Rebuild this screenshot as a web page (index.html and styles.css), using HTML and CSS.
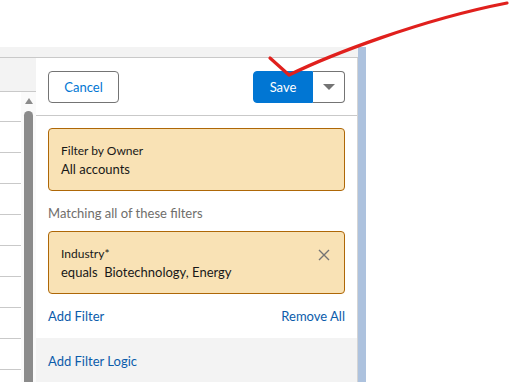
FILE: index.html
```html
<!DOCTYPE html>
<html lang="en">
<head>
    <meta charset="UTF-8">
    <title>Filters</title>
    <link rel="stylesheet" href="styles.css">
</head>
<body>
    <div class="stage">
        <div class="main">
            <div class="top-band"></div>
            <div class="split">
                <div class="list">
                    <div class="list-head"></div>
                    <div class="list-body">
                        <div class="rows">
                            <div class="row"></div>
                            <div class="row"></div>
                            <div class="row"></div>
                            <div class="row"></div>
                            <div class="row"></div>
                            <div class="row"></div>
                            <div class="row"></div>
                            <div class="row"></div>
                            <div class="row"></div>
                        </div>
                        <div class="scroll">
                            <div class="scroll-arrow"></div>
                            <div class="scroll-thumb"></div>
                        </div>
                    </div>
                </div>

                <div class="panel">
                    <div class="panel-head">
                        <button class="btn btn-neutral">Cancel</button>
                        <div class="btn-group">
                            <button class="btn btn-brand">Save</button>
                            <button class="btn btn-menu"><span class="caret"></span></button>
                        </div>
                    </div>
                    <div class="panel-body">
                        <div class="filter-card">
                            <div class="filter-label">Filter by Owner</div>
                            <div class="filter-value">All accounts</div>
                        </div>
                        <div class="section-label">Matching all of these filters</div>
                        <div class="filter-card">
                            <div class="filter-label">Industry*</div>
                            <div class="filter-value">equals&nbsp; Biotechnology, Energy</div>
                            <svg class="remove" width="12" height="12" viewBox="0 0 12 12">
                                <path d="M1 1 L11 11 M11 1 L1 11" stroke="#747474" stroke-width="1.4" fill="none"/>
                            </svg>
                        </div>
                        <div class="link-row">
                            <a href="#" class="link">Add Filter</a>
                            <a href="#" class="link">Remove All</a>
                        </div>
                    </div>
                    <div class="panel-foot">
                        <a href="#" class="link">Add Filter Logic</a>
                    </div>
                </div>
            </div>
        </div>
        <div class="edge"></div>
    </div>

    <svg class="annotation" width="509" height="100" viewBox="0 0 509 100">
        <path d="M270 58 L289 75 C 330 55 420 20 507 3" stroke="#e0201d" stroke-width="3.2" fill="none" stroke-linecap="round" stroke-linejoin="round"/>
    </svg>
</body>
</html>
```

FILE: styles.css
```css
* { box-sizing: border-box; }
body {
    margin: 0;
    background: #fff;
    font-family: Lato, 'Open Sans', sans-serif;
    color: #181818;
    height: 382px;
    overflow: hidden;
    position: relative;
}

.stage {
    margin-top: 47px;
    display: flex;
    height: 335px;
}

.main {
    width: 358px;
    display: flex;
    flex-direction: column;
}
.top-band {
    height: 11px;
    background: #f3f3f3;
    border-bottom: 1px solid #c9c9c9;
}
.split {
    flex: 1;
    display: flex;
    min-height: 0;
}

/* list behind the panel */
.list {
    width: 36px;
    display: flex;
    flex-direction: column;
}
.list-head {
    height: 34px;
    background: #f3f3f3;
    border-bottom: 1px solid #c9c9c9;
}
.list-body {
    flex: 1;
    display: flex;
    min-height: 0;
}
.rows {
    width: 21px;
}
.row {
    height: 31px;
    border-bottom: 1px solid #c9c9c9;
}
.row:first-child { height: 30px; }
.scroll {
    width: 15px;
    background: #fafafa;
    padding: 6px 3px 0;
    display: flex;
    flex-direction: column;
    align-items: center;
}
.scroll-arrow {
    width: 0;
    height: 0;
    border-left: 4px solid transparent;
    border-right: 4px solid transparent;
    border-bottom: 6px solid #8b8b8b;
}
.scroll-thumb {
    margin-top: 7px;
    flex: 1;
    width: 9px;
    background: #8b8b8b;
    border-radius: 5px 5px 0 0;
}

/* filter panel */
.panel {
    width: 322px;
    background: #fff;
    border-right: 1px solid #d4d4d4;
    display: flex;
    flex-direction: column;
}
.panel-head {
    height: 58px;
    padding: 13px 12px 0;
    display: flex;
    justify-content: space-between;
    align-items: flex-start;
    border-bottom: 1px solid #c9c9c9;
}
.btn {
    height: 32px;
    font-family: inherit;
    font-size: 13px;
    border-radius: 4px;
    cursor: pointer;
}
.btn-neutral {
    width: 71px;
    background: #fff;
    border: 1px solid #747474;
    color: #0176d3;
}
.btn-group {
    display: flex;
}
.btn-brand {
    width: 60px;
    background: #0176d3;
    border: 1px solid #0176d3;
    color: #fff;
    border-radius: 4px 0 0 4px;
}
.btn-menu {
    width: 32px;
    background: #fff;
    border: 1px solid #747474;
    border-left: none;
    border-radius: 0 4px 4px 0;
    display: flex;
    align-items: center;
    justify-content: center;
}
.caret {
    width: 0;
    height: 0;
    border-left: 6px solid transparent;
    border-right: 6px solid transparent;
    border-top: 6px solid #747474;
}

.panel-body {
    padding: 12px 12px 0;
    flex: 1;
}
.filter-card {
    position: relative;
    height: 63px;
    background: #f9e2b5;
    border: 1px solid #ae6707;
    border-radius: 4px;
    padding: 13px 12px 0;
}
.filter-label {
    font-size: 12px;
    line-height: 18px;
}
.filter-value {
    font-size: 13px;
    line-height: 19px;
}
.remove {
    position: absolute;
    top: 17px;
    right: 14px;
}
.section-label {
    color: #706e6b;
    font-size: 13px;
    line-height: 18px;
    padding: 13px 0 9px;
}
.link-row {
    display: flex;
    justify-content: space-between;
    padding-top: 14px;
    font-size: 13px;
}
.link {
    color: #0b5cab;
    text-decoration: none;
    font-size: 13px;
}
.panel-foot {
    height: 44px;
    background: #f3f3f3;
    padding: 12px 12px 0;
}

.edge {
    width: 8px;
    background: #adc2de;
}

.annotation {
    position: absolute;
    top: 0;
    left: 0;
    pointer-events: none;
}
```
